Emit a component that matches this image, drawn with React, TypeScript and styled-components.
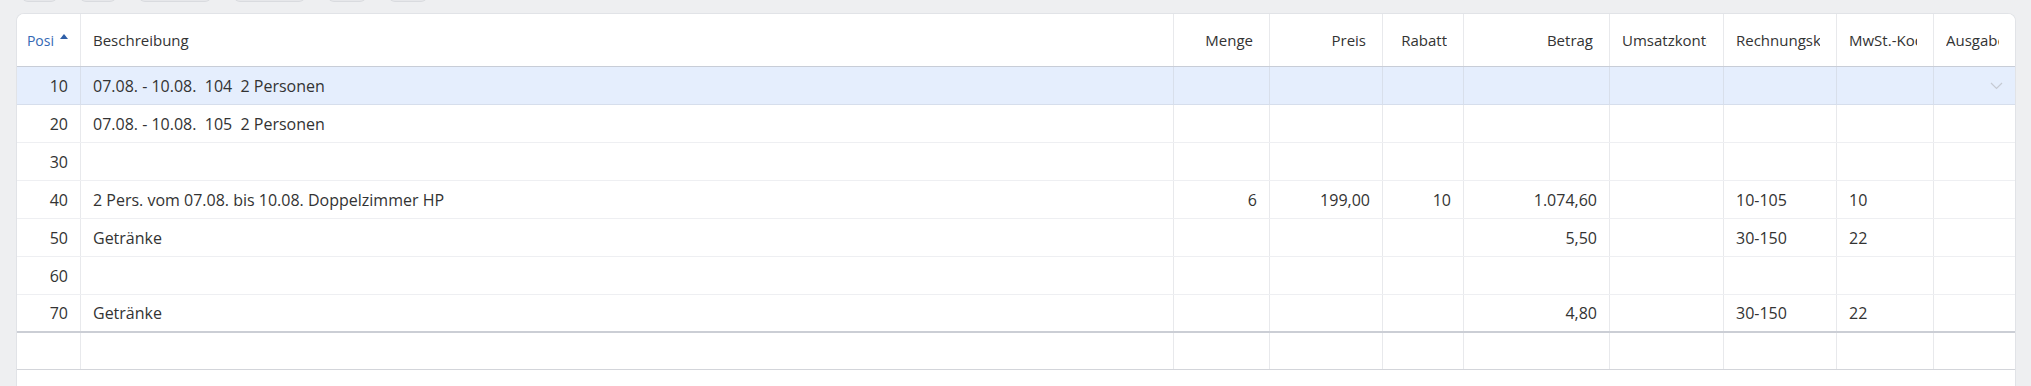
import * as React from 'react';
import styled, { createGlobalStyle, css } from 'styled-components';

const GlobalStyle = createGlobalStyle`
  html, body {
    margin: 0;
    padding: 0;
    background: #eeeff1;
    overflow: hidden;
  }
  body {
    font-family: "Open Sans", "Noto Sans", sans-serif;
    font-size: 16px;
    color: #333333;
  }
`;

const COLUMNS = '64px 1093px 96px 113px 81px 146px 114px 113px 97px 81px';

const Page = styled.div`
  height: 386px;
  padding: 0 15px 0 16px;
  display: flex;
  flex-direction: column;
  overflow: hidden;
`;

const Toolbar = styled.div`
  display: flex;
  gap: 23px;
  margin-top: -30px;
  padding-left: 6px;
`;

const ToolButton = styled.div<{ $w: number }>`
  width: ${p => p.$w}px;
  height: 31px;
  border-radius: 6px;
  background: #e6e7ea;
  box-shadow: 0 1px 0 #d9dbdf;
`;

const Card = styled.div`
  margin-top: 12px;
  flex: 1;
  background: #ffffff;
  border: 1px solid #e1e3e7;
  border-bottom: none;
  border-radius: 8px 8px 0 0;
  overflow: hidden;
`;

const Row = styled.div<{ $selected?: boolean; $kind?: 'head' | 'body' | 'last' | 'foot' }>`
  display: grid;
  grid-template-columns: ${COLUMNS};
  box-sizing: border-box;
  height: 38px;
  border-bottom: 1px solid #eeeff2;
  background: ${p => (p.$selected ? '#e5eefd' : '#ffffff')};
  ${p => p.$selected && css`border-bottom-color: #d6deec;`}
  ${p => p.$kind === 'head' && css`
    height: 53px;
    font-size: 15px;
    border-bottom: 1px solid #c8cdd7;
  `}
  ${p => p.$kind === 'last' && css`
    border-bottom: 2px solid #cbced5;
  `}
  ${p => p.$kind === 'foot' && css`
    height: 37px;
    border-bottom: 1px solid #d3d5da;
  `}
`;

const Cell = styled.div<{ $right?: boolean; $selected?: boolean }>`
  display: flex;
  align-items: center;
  justify-content: ${p => (p.$right ? 'flex-end' : 'flex-start')};
  box-sizing: border-box;
  padding: 0 12px;
  border-right: 1px solid ${p => (p.$selected ? '#d8dfeb' : '#e8e9ec')};
  white-space: pre;
  overflow: hidden;
  position: relative;
  &:last-child {
    border-right: none;
  }
`;

const HeadCell = styled(Cell)<{ $sorted?: boolean }>`
  padding: 0 ${p => (p.$sorted ? '12px 0 6px' : '16px 0 12px')};
  color: ${p => (p.$sorted ? '#3568b4' : '#333333')};
`;

const HeadLabel = styled.span<{ $fixed?: boolean }>`
  overflow: hidden;
  white-space: nowrap;
  text-overflow: clip;
  flex-shrink: ${p => (p.$fixed ? 0 : 1)};
  ${p => p.$fixed && css`font-size: 14px;`}
`;

const SortArrow = styled.span`
  flex-shrink: 0;
  width: 0;
  height: 0;
  margin-left: 6px;
  margin-bottom: 7px;
  border-left: 4px solid transparent;
  border-right: 4px solid transparent;
  border-bottom: 5px solid #2f5fa8;
`;

const Chevron = styled.svg`
  position: absolute;
  right: 12px;
  top: 50%;
  margin-top: -4px;
`;

type Col = { key: string; title: string; right: boolean };

const columns: Col[] = [
  { key: 'pos', title: 'Posi', right: true },
  { key: 'desc', title: 'Beschreibung', right: false },
  { key: 'qty', title: 'Menge', right: true },
  { key: 'price', title: 'Preis', right: true },
  { key: 'disc', title: 'Rabatt', right: true },
  { key: 'amount', title: 'Betrag', right: true },
  { key: 'account', title: 'Umsatzkonto', right: false },
  { key: 'invoice', title: 'Rechnungskonto', right: false },
  { key: 'vat', title: 'MwSt.-Kode', right: false },
  { key: 'out', title: 'Ausgabe', right: false },
];

type Line = Partial<Record<string, string>>;

const lines: Line[] = [
  { pos: '10', desc: '07.08. - 10.08.  104  2 Personen' },
  { pos: '20', desc: '07.08. - 10.08.  105  2 Personen' },
  { pos: '30' },
  {
    pos: '40', desc: '2 Pers. vom 07.08. bis 10.08. Doppelzimmer HP',
    qty: '6', price: '199,00', disc: '10', amount: '1.074,60', invoice: '10-105', vat: '10',
  },
  { pos: '50', desc: 'Getränke', amount: '5,50', invoice: '30-150', vat: '22' },
  { pos: '60' },
  { pos: '70', desc: 'Getränke', amount: '4,80', invoice: '30-150', vat: '22' },
];

const buttons = [35, 36, 72, 71, 38, 38];

export default function App() {
  return (
    <>
      <GlobalStyle />
      <Page>
        <Toolbar>
          {buttons.map((w, i) => <ToolButton key={i} $w={w} />)}
        </Toolbar>
        <Card>
          <Row $kind="head">
            {columns.map(c => (
              <HeadCell key={c.key} $right={c.right} $sorted={c.key === 'pos'}>
                <HeadLabel $fixed={c.key === 'pos'}>{c.title}</HeadLabel>
                {c.key === 'pos' && <SortArrow />}
              </HeadCell>
            ))}
          </Row>
          {lines.map((line, i) => {
            const selected = i === 0;
            return (
              <Row key={i} $selected={selected} $kind={i === lines.length - 1 ? 'last' : 'body'}>
                {columns.map(c => (
                  <Cell key={c.key} $right={c.right} $selected={selected}>
                    {line[c.key] ?? ''}
                    {selected && c.key === 'out' && (
                      <Chevron width="13" height="8" viewBox="0 0 13 8">
                        <path d="M1 1 L6.5 6.5 L12 1" fill="none" stroke="#c6cad3" strokeWidth="1.2" />
                      </Chevron>
                    )}
                  </Cell>
                ))}
              </Row>
            );
          })}
          <Row $kind="foot">
            {columns.map(c => <Cell key={c.key} />)}
          </Row>
        </Card>
      </Page>
    </>
  );
}
